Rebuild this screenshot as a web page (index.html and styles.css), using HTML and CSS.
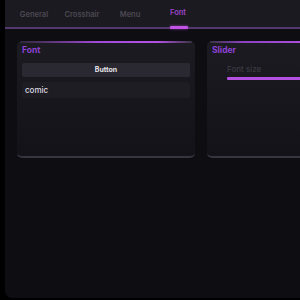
FILE: index.html
```html
<!DOCTYPE html>
<html>
<head>
<meta charset="utf-8">
<link rel="stylesheet" href="styles.css">
</head>
<body>
<div class="window">
  <div class="tabbar">
    <div class="tab">General</div>
    <div class="tab">Crosshair</div>
    <div class="tab">Menu</div>
    <div class="tab active">Font</div>
  </div>
  <div class="content">
    <div class="panel">
      <div class="panel-title">Font</div>
      <div class="btn">Button</div>
      <div class="input">comic</div>
    </div>
    <div class="panel right">
      <div class="panel-title">Slider</div>
      <div class="slider">
        <div class="slider-label">Font size</div>
        <div class="slider-bar"></div>
      </div>
    </div>
  </div>
</div>
</body>
</html>
```
FILE: styles.css
```css
html, body {
  margin: 0;
  padding: 0;
  background: #000;
  width: 300px;
  height: 300px;
  overflow: hidden;
  font-family: "Inter", "Noto Sans", sans-serif;
}
.window {
  margin-left: 5px;
  width: 310px;
  height: 298px;
  background: #0e0d12;
  border-radius: 0 0 7px 7px;
  overflow: hidden;
}
.tabbar {
  height: 27px;
  background: #1b1a20;
  border-bottom: 2px solid #55386f;
  display: flex;
  padding-left: 5px;
}
.tab {
  width: 48px;
  text-align: center;
  font-size: 7.5px;
  font-weight: 600;
  color: #4b4952;
  padding-top: 10px;
  position: relative;
}
.tab.active {
  color: #9b45c8;
  padding-top: 8px;
}
.tab.active::after {
  content: "";
  position: absolute;
  left: 16px;
  width: 18px;
  bottom: -2px;
  height: 3px;
  background: #c154e6;
  border-radius: 1px;
  box-shadow: 0 0 3px rgba(193, 84, 230, 0.6);
}
.content {
  display: flex;
  gap: 12px;
  padding: 12px 0 0 12px;
}
.panel {
  width: 178px;
  flex: none;
  border-radius: 5px;
  background: linear-gradient(#1c1b22, #131218);
  border-bottom: 2px solid #36343f;
  position: relative;
  padding: 0 5px;
  box-sizing: border-box;
  height: 117px;
}
.panel::before {
  content: "";
  position: absolute;
  left: 3px;
  right: 3px;
  top: 0;
  height: 2px;
  border-radius: 1px;
  background: linear-gradient(90deg, #2f2838, #a04ad8 45%, #b552e4 80%, #3a3444);
}
.panel.right {
  width: 110px;
}
.panel.right::before {
  background: linear-gradient(90deg, #3a3444, #8a42c0 30%, #b552e4);
  right: 0;
}
.panel-title {
  font-size: 8.5px;
  font-weight: 700;
  color: #8e43d6;
  padding-top: 4px;
  height: 13px;
}
.btn {
  margin-top: 5px;
  height: 14px;
  line-height: 14px;
  background: #2a2830;
  border-radius: 2px;
  text-align: center;
  font-size: 7px;
  font-weight: 700;
  color: #e6e4ea;
}
.input {
  margin-top: 5px;
  height: 16px;
  line-height: 16px;
  background: #1e1d23;
  border-radius: 2px;
  padding-left: 3px;
  font-size: 8px;
  font-weight: 500;
  color: #dedce2;
}
.slider {
  padding-left: 15px;
  padding-top: 6px;
}
.slider-label {
  font-size: 8px;
  font-weight: 500;
  color: #3b3942;
  height: 10px;
}
.slider-bar {
  margin-top: 3px;
  height: 3px;
  background: #b352e0;
  border-radius: 1px;
}
```
